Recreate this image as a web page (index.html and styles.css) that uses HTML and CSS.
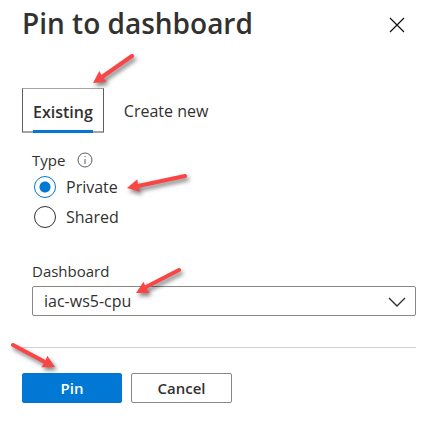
FILE: index.html
```html
<!DOCTYPE html>
<html lang="en">
<head>
<meta charset="utf-8">
<title>Pin to dashboard</title>
<link rel="stylesheet" href="styles.css">
</head>
<body>
<main class="panel">
  <header class="head">
    <h1 class="title">Pin to dashboard</h1>
    <button class="close" type="button" aria-label="Close">
      <svg width="16" height="16" viewBox="0 0 16 16"><path d="M1 1L15 15M15 1L1 15"/></svg>
    </button>
  </header>

  <nav class="tabs">
    <button class="tab tab-active" type="button"><span class="tab-text">Existing</span></button>
    <button class="tab" type="button">Create new</button>
  </nav>

  <form class="form">
    <fieldset class="group">
      <legend class="label">Type
        <svg class="info" width="16" height="16" viewBox="0 0 16 16"><circle cx="8" cy="8" r="7"/><path d="M8 7V12M8 4V5"/></svg>
      </legend>
      <label class="option"><input class="radio" type="radio" name="type" checked>Private</label>
      <label class="option"><input class="radio" type="radio" name="type">Shared</label>
    </fieldset>

    <label class="label" for="dashboard">Dashboard</label>
    <div class="select-wrap">
      <select class="select" id="dashboard"><option>iac-ws5-cpu</option></select>
      <svg class="chevron" width="18" height="10" viewBox="0 0 18 10"><path d="M1 1L9 9L17 1"/></svg>
    </div>
  </form>

  <footer class="actions">
    <button class="btn btn-primary" type="button">Pin</button>
    <button class="btn" type="button">Cancel</button>
  </footer>

  <svg class="arrows" width="200" height="380" viewBox="0 0 200 380" aria-hidden="true">
    <defs>
      <path id="head" d="M0 0L12 -6.5L11.5 -2.3V2.3L12 6.5Z"/>
    </defs>
    <g class="arrow"><use href="#head" transform="translate(93 83) rotate(-34)"/><path d="M102 77L132 56"/></g>
    <g class="arrow"><use href="#head" transform="translate(127 188) rotate(-12)"/><path d="M138 186L185 176"/></g>
    <g class="arrow"><use href="#head" transform="translate(136 293) rotate(-28)"/><path d="M146 287L179 270"/></g>
    <g class="arrow"><use href="#head" transform="translate(55 367) rotate(207)"/><path d="M45 362L13 345"/></g>
  </svg>
</main>
</body>
</html>
```
FILE: styles.css
```css
* {
  box-sizing: border-box;
}

body {
  margin: 0;
  background: #fff;
  color: #323130;
  font: 16px/24px "Open Sans", "Noto Sans", sans-serif;
}

button,
select {
  font: inherit;
  color: inherit;
}

.panel {
  position: relative;
  padding: 3px 15px 28px 22px;
}

.head {
  display: flex;
  align-items: center;
  justify-content: space-between;
  height: 40px;
}

.title {
  margin: 0;
  font-size: 28px;
  line-height: 40px;
  font-weight: 600;
}

.close {
  display: flex;
  margin-top: 4px;
  padding: 0 11px;
  border: 0;
  background: none;
}

.close svg {
  fill: none;
  stroke: #111;
  stroke-width: 1.2;
}

.tabs {
  display: flex;
  gap: 10px;
  margin-top: 45px;
}

.tab {
  display: flex;
  height: 45px;
  padding: 0 10px;
  border: 0;
  background: none;
  font-size: 16px;
  line-height: 46px;
}

.tab-active {
  border: 1px solid #605e5c;
  border-top-color: #a5a4a3;
  border-bottom: 2px solid #a5a4a3;
  font-weight: 600;
}

.tab-text {
  height: 44px;
  border-bottom: 3px solid #0078d4;
}

.form {
  padding: 13px 0 31px 10px;
  border-bottom: 1px solid #d2d0ce;
}

.group {
  margin: 0 0 25px;
  padding: 0;
  border: 0;
}

.label {
  display: flex;
  align-items: center;
  gap: 12px;
  height: 27px;
  padding: 0;
  font-size: 15px;
}

.form > .label {
  height: 28px;
  padding-bottom: 3px;
}

.info {
  fill: none;
  stroke: #605e5c;
}

.option {
  display: flex;
  align-items: center;
  gap: 10px;
  height: 32px;
  margin-left: 2px;
}

.group .option:nth-of-type(1) {
  height: 28px;
}

.radio {
  appearance: none;
  width: 22px;
  height: 22px;
  margin: 0;
  border: 1px solid #323130;
  border-radius: 50%;
}

.radio:checked {
  border-color: #0078d4;
  background: radial-gradient(circle, #0078d4 5px, transparent 6px);
}

.select-wrap {
  position: relative;
}

.select {
  display: block;
  appearance: none;
  width: 100%;
  height: 30px;
  padding: 0 36px 0 11px;
  border: 1px solid #8a8886;
  border-radius: 2px;
  background: #fff;
}

.chevron {
  position: absolute;
  top: 11px;
  right: 10px;
  fill: none;
  stroke: #323130;
  stroke-width: 1.4;
  pointer-events: none;
}

.actions {
  display: flex;
  gap: 9px;
  padding-top: 25px;
}

.btn {
  width: 101px;
  height: 30px;
  padding: 0;
  border: 1px solid #8a8886;
  border-radius: 2px;
  background: #fff;
  font-size: 15px;
  line-height: 28px;
  font-weight: 600;
}

.btn-primary {
  width: 100px;
  border-color: #0078d4;
  background: #0078d4;
  color: #fff;
}

.arrows {
  position: absolute;
  top: 0;
  left: 0;
  pointer-events: none;
}

.arrow {
  fill: #fb4545;
  stroke: #fb4545;
  filter: drop-shadow(2px 3px 2px rgba(0, 0, 0, 0.5));
}

.arrow path {
  stroke-width: 4;
  stroke-linecap: round;
}

.arrow use,
#head {
  stroke: none;
}
```
